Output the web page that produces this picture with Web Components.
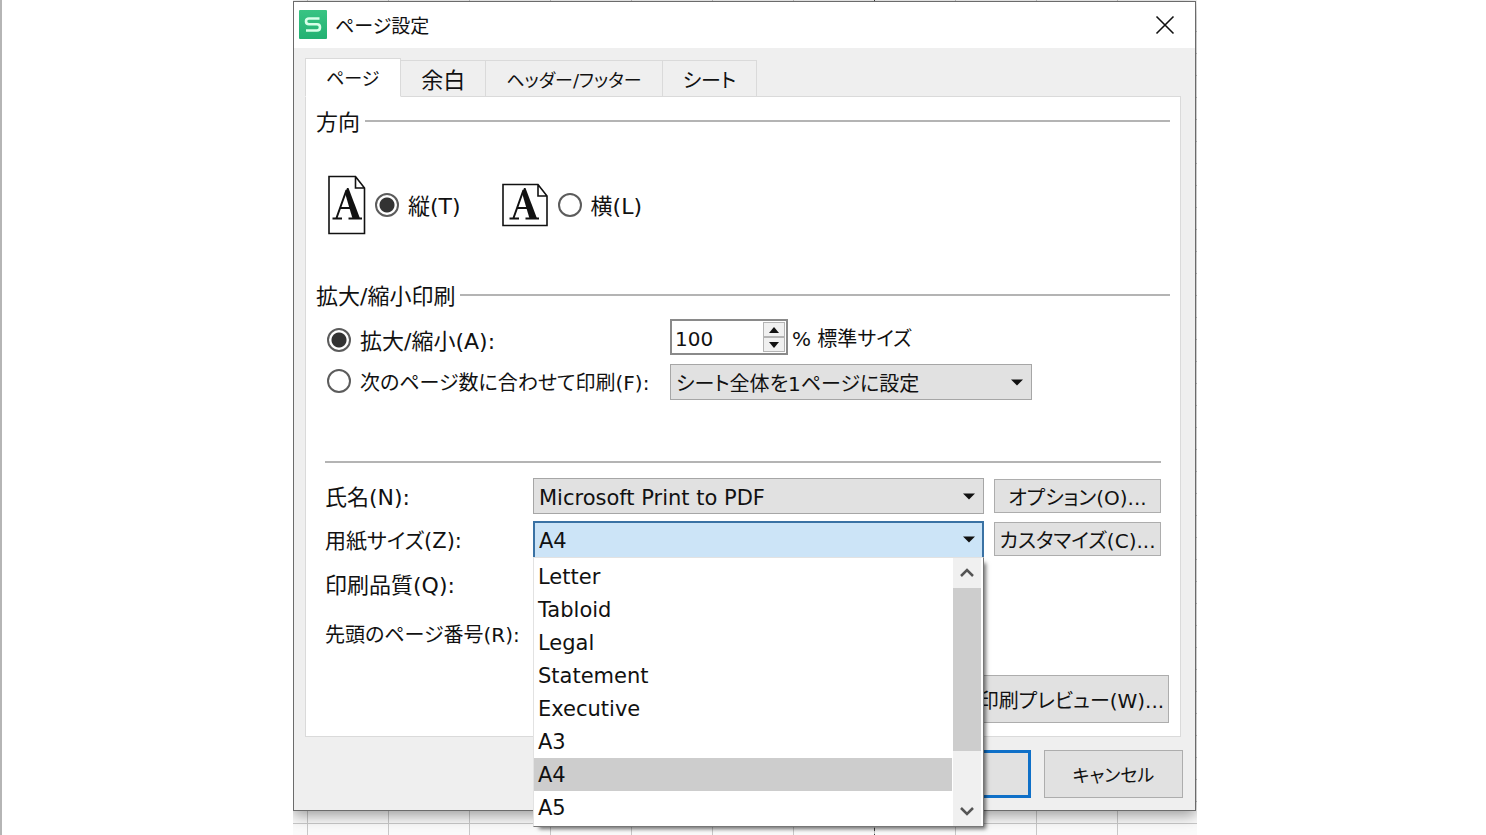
<!DOCTYPE html>
<html lang="ja">
<head>
<meta charset="utf-8">
<title>ページ設定</title>
<style>
  html { height: 100%; }
  body {
    margin: 0; box-sizing: border-box; min-height: 100%; display: flex; justify-content: center; padding-left: 2px;
    border-left: 2px solid #b5b5b5; background: #fff; color: #111;
    font: 22px/28px "DejaVu Sans", "Noto Sans CJK JP", sans-serif;
    font-feature-settings: "palt";
  }
</style>
</head>
<body>
<sheet-backdrop>
  <setup-dialog>
    <span slot="title">ページ設定</span>
    <tab-bar slot="tabs"></tab-bar>
    <group-box label="方向">
      <orientation-picker slot="body"></orientation-picker>
    </group-box>
    <group-box label="拡大/縮小印刷">
      <scale-options slot="body"></scale-options>
    </group-box>
    <printer-form></printer-form>
    <push-button slot="footer" size="large" primary label="OK"></push-button>
    <push-button slot="footer" size="large" compact>キャンセル</push-button>
  </setup-dialog>
</sheet-backdrop>

<script>
function define(name, html, setup) {
  customElements.define(name, class extends HTMLElement {
    connectedCallback() {
      if (this.shadowRoot) return;
      const t = document.createElement('template');
      t.innerHTML = html;
      this.attachShadow({ mode: 'open' }).append(t.content.cloneNode(true));
      if (setup) setup(this, this.shadowRoot);
    }
  });
}

/* Spreadsheet grid behind the dialog */
define('sheet-backdrop', `
<style>
  :host {
    display: block; box-sizing: border-box; width: 100%; max-width: 904px; padding: 1px 1px 24px 0; overflow: hidden;
    background:
      repeating-linear-gradient(#444 0 3px, transparent 3px 6px) 581px 0 / 1px 100% no-repeat,
      repeating-linear-gradient(90deg, #c8c8c8 0 1px, transparent 1px 81px) 14px 0 / 100% 100% no-repeat,
      repeating-linear-gradient(transparent 0 21px, #c8c8c8 21px 22px) 0 10px / 100% 100%,
      #fafafa;
  }
</style>
<slot></slot>`);

define('setup-dialog', `
<style>
  :host { display: block; border: 1px solid #6b6b6b; background: #efefef; box-shadow: 0 4px 14px rgba(0,0,0,.4); }
  header { display: flex; align-items: center; height: 46px; padding: 0 18px 0 4px; gap: 7px; background: #fff; }
  .logo { width: 30px; height: 30px; flex: none; }
  h1 { flex: 1; margin: 0; padding-top: 2px; font: inherit; font-size: 19px; line-height: 28px; }
  .close { width: 24px; height: 24px; padding: 0; border: 0; background: none; }
  .close svg { display: block; }
  .content { padding: 10px 14px 0 11px; }
  .panel { box-sizing: border-box; height: 641px; padding: 10px 10px 0; border: 1px solid #dadada; background: #fff; margin-top: -1px; }
  footer { display: flex; justify-content: flex-end; gap: 13px; padding: 13px 12px 12px; }
</style>
<header>
  <svg class="logo" viewBox="0 0 30 30" aria-hidden="true">
    <defs><linearGradient id="g" x2="0" y2="1"><stop stop-color="#39c483"/><stop offset="1" stop-color="#22b172"/></linearGradient></defs>
    <rect x="1" y="0" width="28" height="29" rx="1" fill="url(#g)"/>
    <path d="M21.500 8.500H11C9 8.500 8 9.500 8 11.200S9 14.200 11 14.200H19C21 14.200 22 15.500 22 17.300S21 20.500 19 20.500H8" fill="none" stroke="#d9ffe9" stroke-width="2.600"/>
  </svg>
  <h1><slot name="title"></slot></h1>
  <button class="close" aria-label="閉じる"><svg width="24" height="24" viewBox="0 0 24 24"><path d="M3.500 3.500L20.500 20.500M20.500 3.500L3.500 20.500" stroke="#111" stroke-width="1.600"/></svg></button>
</header>
<div class="content">
  <slot name="tabs"></slot>
  <div class="panel"><slot></slot></div>
</div>
<footer><slot name="footer"></slot></footer>`);

define('tab-bar', `
<style>
  :host { display: flex; align-items: flex-end; height: 39px; position: relative; }
  button {
    box-sizing: border-box; height: 37px; padding: 4px 20px 0; border: 1px solid #dadada; border-left: 0; background: #efefef;
    font: inherit; font-feature-settings: inherit; line-height: 28px; color: inherit; white-space: nowrap;
  }
  .small { font-size: 18px; }
  .medium { font-size: 20px; }
  button[aria-selected=true] { height: 39px; padding: 2px 21px 0 20px; border-left: 1px solid #dadada; border-bottom-color: #fff; background: #fff; }
</style>
<button class="small" role="tab" aria-selected="true">ページ</button><button role="tab">余白</button><button class="small" role="tab">ヘッダー/フッター</button><button class="medium" role="tab">シート</button>`);

define('group-box', `
<style>
  :host { display: block; }
  .head { display: flex; align-items: center; gap: 5px; height: 28px; }
  .head::after { content: ""; flex: 1; height: 2px; background: #b4b4b4; }
  #t { padding-top: 3px; }
</style>
<div class="head"><span id="t"></span></div>
<div role="group" aria-labelledby="t"><slot name="body"></slot></div>`,
(host, root) => { root.getElementById('t').textContent = host.getAttribute('label'); });

define('radio-option', `
<style>
  :host { display: block; height: 28px; }
  label { display: flex; align-items: center; gap: 9px; height: 28px; white-space: nowrap; }
  span { padding-top: 3px; }
  input {
    appearance: none; box-sizing: border-box; width: 24px; height: 24px; margin: 0; border: 2px solid #5c5c5c; border-radius: 50%;
    background: #fff; flex: none;
  }
  input:checked { background: radial-gradient(circle, #333 0 7px, #fff 8px); }
</style>
<label><input type="radio"><span><slot></slot></span></label>`,
(host, root) => { root.querySelector('input').checked = host.hasAttribute('checked'); });

define('orientation-picker', `
<style>
  :host { display: flex; align-items: center; height: 118px; padding: 11px 0 17px 12px; }
  svg { flex: none; margin-right: 9px; }
  radio-option + svg { margin-left: 41px; margin-right: 10px; }
</style>
<svg width="38" height="60" viewBox="0 0 38 60" aria-hidden="true">
  <path d="M1 1.500H27.500L36.500 13V58.500H1Z M27.500 1.500V13H36.500" fill="#fff" stroke="#111" stroke-width="1.600"/>
  <path d="M4.500 43.500H14M20.500 43.500H34M8.500 43L18.500 15M12.500 33H24" fill="none" stroke="#111" stroke-width="2"/>
  <path d="M17 18L19 13H20.500L32 43.500H24.500Z" fill="#111"/>
</svg>
<radio-option checked>縦(T)</radio-option>
<svg width="46" height="44" viewBox="0 0 46 44" aria-hidden="true">
  <path d="M1 1.500H36L45 13V42.500H1Z M36 1.500V13H45" fill="#fff" stroke="#111" stroke-width="1.600"/>
  <path d="M7.500 35.500H17M23.500 35.500H37M11.500 35L21.500 7M15.500 25H27" fill="none" stroke="#111" stroke-width="2"/>
  <path d="M20 10L22 5H23.500L35 35.500H27.500Z" fill="#111"/>
</svg>
<radio-option>横(L)</radio-option>`);

define('combo-box', `
<style>
  :host { display: block; position: relative; height: 36px; }
  select {
    appearance: none; box-sizing: border-box; display: block; width: 100%; height: 100%; padding: 3px 30px 0 5px; margin: 0;
    border: 1px solid #a6a6a6; border-radius: 0; background: #e1e1e1; color: inherit; font: inherit; font-feature-settings: inherit; font-size: 21px;
  }
  :host([kana]) select { padding-top: 4px; font-size: 20px; }
  :host([open]) select { border: 2px solid #3a72a4; border-bottom: 0; padding: 1px 30px 0 4px; background: #cce4f7; }
  svg { position: absolute; right: 9px; top: 15px; pointer-events: none; }
</style>
<select></select>
<svg width="12" height="7" viewBox="0 0 12 7" aria-hidden="true"><path d="M0 0.500H12L6 6.500Z" fill="#111"/></svg>
<slot></slot>`,
(host, root) => {
  const s = root.querySelector('select');
  s.append(new Option(host.getAttribute('value')));
  s.setAttribute('aria-label', host.getAttribute('label'));
});

define('spin-box', `
<style>
  :host { display: flex; box-sizing: border-box; width: 118px; height: 36px; border: 2px solid #8a8a8a; background: #fff; }
  input { flex: 1; min-width: 0; padding: 3px 0 0 3px; border: 0; background: none; font: inherit; color: inherit; outline: 0; }
  div { display: flex; flex-direction: column; width: 22px; margin: 1px; flex: none; }
  button { flex: 1; display: flex; align-items: center; justify-content: center; padding: 0; border: 1px solid #b4b4b4; background: #f0f0f0; }
</style>
<input type="text" value="100" aria-label="倍率">
<div>
  <button aria-label="増やす"><svg width="10" height="6" viewBox="0 0 10 6"><path d="M0 6H10L5 0Z" fill="#111"/></svg></button>
  <button aria-label="減らす"><svg width="10" height="6" viewBox="0 0 10 6"><path d="M0 0H10L5 6Z" fill="#111"/></svg></button>
</div>`);

define('scale-options', `
<style>
  :host { display: grid; grid-template-columns: 343px 362px; align-items: center; padding: 10px 0 61px 11px; }
  .choices { display: grid; gap: 13px; padding-top: 2px; }
  .values { display: grid; gap: 9px; }
  .spin { display: flex; align-items: center; gap: 4px; white-space: nowrap; }
  .spin span { padding-top: 3px; }
  .small { font-size: 20px; }
</style>
<div class="choices">
  <radio-option checked>拡大/縮小(A):</radio-option>
  <radio-option class="small">次のページ数に合わせて印刷(F):</radio-option>
</div>
<div class="values">
  <div class="spin small"><spin-box></spin-box><span>% 標準サイズ</span></div>
  <combo-box kana value="シート全体を1ページに設定" label="ページに合わせる"></combo-box>
</div>`);

define('push-button', `
<style>
  :host { display: block; height: 34px; }
  :host([size=large]) { height: 48px; width: 139px; }
  button {
    box-sizing: border-box; width: 100%; height: 100%; padding: 4px 0 0; border: 1px solid #adadad; background: #e1e1e1;
    font: inherit; font-feature-settings: inherit; font-size: 20px; line-height: 28px; color: inherit; white-space: nowrap;
  }
  :host([compact]) button { font-size: 18px; }
  :host([primary]) button { border: 3px solid #0f70c8; }
</style>
<button><slot></slot></button>`,
(host, root) => { if (host.hasAttribute('label')) root.querySelector('button').setAttribute('aria-label', host.getAttribute('label')); });

define('drop-list', `
<style>
  :host {
    position: absolute; z-index: 1; top: 36px; left: 0; right: 0; display: flex; box-sizing: border-box; padding-right: 2px;
    border: 1px solid #e2e2e2; border-right-color: #777; border-bottom-color: #777; background: #fff; box-shadow: 4px 4px 4px -2px rgba(0,0,0,.55);
  }
  ul { flex: 1; margin: 0; padding: 2px 0; list-style: none; }
  li { height: 33px; padding-left: 4px; font-size: 21px; line-height: 35px; }
  li[aria-selected=true] { background: #cdcdcd; }
  .bar { display: flex; flex-direction: column; width: 28px; margin-left: 1px; background: #f0f0f0; }
  button { display: grid; place-items: center; height: 30px; padding: 0; border: 0; background: none; }
  .thumb { height: 163px; margin-bottom: auto; background: #cdcdcd; }
</style>
<ul role="listbox">
  <li role="option">Letter</li><li role="option">Tabloid</li><li role="option">Legal</li><li role="option">Statement</li>
  <li role="option">Executive</li><li role="option">A3</li><li role="option" aria-selected="true">A4</li><li role="option">A5</li>
</ul>
<div class="bar">
  <button aria-label="上へ"><svg width="14" height="10" viewBox="0 0 14 10"><path d="M1 8L7 2L13 8" fill="none" stroke="#555" stroke-width="2.500"/></svg></button>
  <div class="thumb"></div>
  <button aria-label="下へ"><svg width="14" height="10" viewBox="0 0 14 10"><path d="M1 2L7 8L13 2" fill="none" stroke="#555" stroke-width="2.500"/></svg></button>
</div>`);

define('printer-form', `
<style>
  :host { display: block; margin: 0 9px; border-top: 2px solid #b4b4b4; padding-top: 15px; }
  .grid { display: grid; grid-template-columns: 198px minmax(0, 1fr) 167px; grid-template-rows: 36px 36px 40px 44px; gap: 7px 10px; align-items: center; white-space: nowrap; }
  .grid span { padding-top: 3px; }
  .kana { font-size: 20px; }
  .mixed { font-size: 21px; }
  .end { display: flex; justify-content: flex-end; margin: 20px -8px 0 0; }
  .end push-button { width: 195px; }
</style>
<div class="grid">
  <span>氏名(N):</span><combo-box value="Microsoft Print to PDF" label="氏名(N)"></combo-box><push-button>オプション(O)...</push-button>
  <span class="mixed">用紙サイズ(Z):</span><combo-box open value="A4" label="用紙サイズ(Z)"><drop-list></drop-list></combo-box><push-button>カスタマイズ(C)...</push-button>
  <span>印刷品質(Q):</span><span></span><span></span>
  <span class="kana">先頭のページ番号(R):</span>
</div>
<div class="end"><push-button size="large">印刷プレビュー(W)...</push-button></div>`);
</script>
</body>
</html>
